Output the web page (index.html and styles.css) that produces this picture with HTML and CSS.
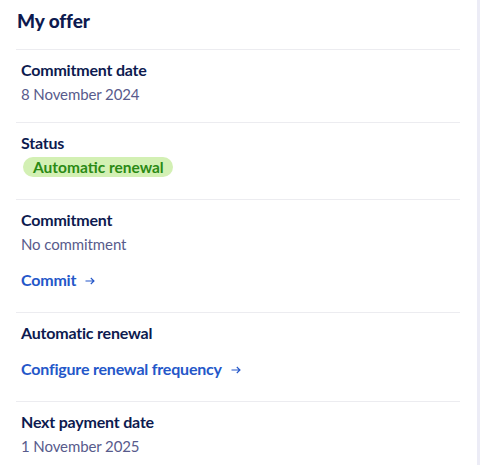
FILE: index.html
```html
<!DOCTYPE html>
<html lang="en">
<head>
<meta charset="utf-8">
<link rel="stylesheet" href="styles.css">
</head>
<body>
<div class="page">
  <section class="card">
    <h2 class="title">My offer</h2>
    <div class="item">
      <div class="label">Commitment date</div>
      <div class="value">8 November 2024</div>
    </div>
    <div class="item">
      <div class="label">Status</div>
      <div class="badge-row"><span class="badge">Automatic renewal</span></div>
    </div>
    <div class="item">
      <div class="label">Commitment</div>
      <div class="value">No commitment</div>
      <a class="link" href="#">Commit <svg class="arrow" width="10" height="8" viewBox="0 0 10 8"><path d="M0.5 4H9M5.8 1L9 4L5.8 7" fill="none" stroke="currentColor" stroke-width="1.1"/></svg></a>
    </div>
    <div class="item">
      <div class="label">Automatic renewal</div>
      <a class="link" href="#">Configure renewal frequency <svg class="arrow" width="10" height="8" viewBox="0 0 10 8"><path d="M0.5 4H9M5.8 1L9 4L5.8 7" fill="none" stroke="currentColor" stroke-width="1.1"/></svg></a>
    </div>
    <div class="item">
      <div class="label">Next payment date</div>
      <div class="value">1 November 2025</div>
    </div>
  </section>
  <div class="edge"></div>
</div>
</body>
</html>
```

FILE: styles.css
```css
html, body {
  margin: 0;
  padding: 0;
  background: #ffffff;
}
body {
  font-family: "Lato", "Open Sans", sans-serif;
  width: 482px;
  height: 465px;
  overflow: hidden;
}
.page {
  display: flex;
  height: 465px;
}
.card {
  width: 444px;
  padding: 0 16px;
  background: #ffffff;
  flex: none;
}
.edge {
  width: 3px;
  margin-left: 1px;
  background: #ececf6;
  flex: none;
}
.title {
  margin: 7px 0 0;
  padding: 0 1px 14px;
  font-size: 19px;
  line-height: 28px;
  font-weight: 900;
  letter-spacing: -0.1px;
  color: #0d1a4f;
  border-bottom: 1px solid #ececf0;
}
.item {
  padding: 8px 5px 16px;
  border-bottom: 1px solid #ececf0;
}
.item:last-child {
  border-bottom: none;
}
.label {
  font-size: 16px;
  line-height: 24px;
  font-weight: 700;
  letter-spacing: -0.2px;
  color: #0d1a4f;
}
.value {
  font-size: 15px;
  line-height: 24px;
  letter-spacing: -0.1px;
  color: #585b8c;
}
.badge-row {
  margin: 2px 0 6px 2px;
  height: 20px;
  display: flex;
}
.badge {
  display: inline-flex;
  align-items: center;
  height: 20px;
  padding: 0 9px 0 10px;
  border-radius: 10px;
  background: #d3f0b4;
  color: #2b8a14;
  font-size: 15.5px;
  font-weight: 700;
}
.link {
  display: flex;
  align-items: center;
  gap: 9px;
  margin: 12px 0 4px;
  font-size: 16px;
  line-height: 24px;
  font-weight: 700;
  letter-spacing: -0.2px;
  color: #2457c9;
  text-decoration: none;
}
.arrow {
  display: block;
  margin-top: 1px;
}
```
